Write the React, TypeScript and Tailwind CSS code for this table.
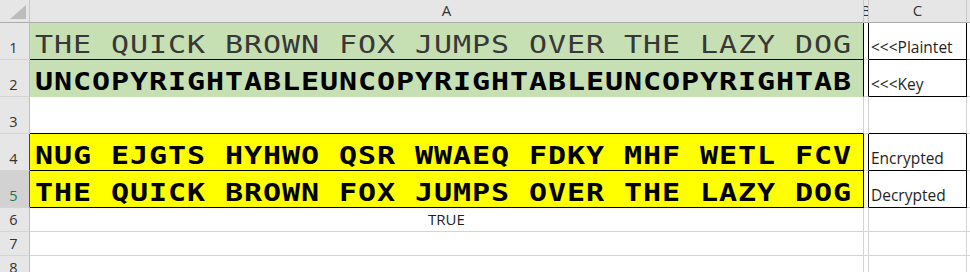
import React from 'react';

const mono = "font-['DejaVu_Sans_Mono',monospace]";
const ui = "font-['Open_Sans',sans-serif]";

function RowHead({ n, active, dark }: { n: number; active?: boolean; dark?: boolean }) {
  return (
    <div
      className={`flex items-end justify-center pr-[2px] pb-[4px] border-r border-b border-b-[#d4d4d4] text-[14.5px] leading-none ${ui} ${
        active
          ? 'bg-[#d2d2d2] text-[#217346] border-r-[#217346]'
          : dark
          ? 'bg-[#e6e6e6] text-[#333] border-r-[#444]'
          : 'bg-[#e6e6e6] text-[#333] border-r-[#bdbdbd]'
      }`}
    >
      {n}
    </div>
  );
}

function BigText({ text, light }: { text: string; light?: boolean }) {
  return (
    <div className="flex items-end h-full pl-[5px] pb-[2px] overflow-visible">
      <span
        className={`block origin-left scale-x-[1.2] whitespace-nowrap text-[25px] leading-none tracking-[0.78px] ${mono} ${
          light ? 'font-normal text-[#383838]' : 'font-bold text-black'
        }`}
      >
        {text}
      </span>
    </div>
  );
}

function Label({ text }: { text: string }) {
  return (
    <div className={`flex items-end h-full pl-[2px] pb-[4px] text-[15.5px] leading-none text-[#1f1f1f] whitespace-nowrap ${ui}`}>
      {text}
    </div>
  );
}

export default function App() {
  return (
    <div className="w-[970px] h-[272px] overflow-hidden bg-white">
      <div className="grid grid-cols-[30px_834px_5px_98px_1fr] grid-rows-[23px_37px_37px_37px_37px_37px_24px_24px_24px]">
        {/* column headers */}
        <div className="flex items-end justify-end pr-[3px] pb-[3px] bg-[#e6e6e6] border-r border-b border-r-[#c8c8c8] border-b-[#ababab]">
          <svg width="16" height="14" viewBox="0 0 16 14">
            <polygon points="0,14 16,14 16,0" fill="#bcbcbc" />
          </svg>
        </div>
        <div className={`flex items-end justify-center pb-[4px] bg-[#e6e6e6] border-r border-b border-r-[#c8c8c8] border-b-[#ababab] text-[15px] leading-none text-[#333] ${ui}`}>
          A
        </div>
        <div className={`flex items-end justify-center pb-[4px] overflow-hidden bg-[#e6e6e6] border-r border-b border-r-[#c8c8c8] border-b-[#ababab] text-[15px] leading-none text-[#333] ${ui}`}>
          B
        </div>
        <div className={`flex items-end justify-center pb-[4px] bg-[#e6e6e6] border-r border-b border-r-[#c8c8c8] border-b-[#ababab] text-[15px] leading-none text-[#333] ${ui}`}>
          C
        </div>
        <div className="bg-[#e6e6e6] border-b border-b-[#ababab]" />

        {/* row 1 */}
        <RowHead n={1} />
        <div className="bg-[#c6e0b4] border-r border-b border-r-black border-b-black">
          <BigText text="THE QUICK BROWN FOX JUMPS OVER THE LAZY DOG" light />
        </div>
        <div className="border-r border-b border-r-black border-b-[#d4d4d4]" />
        <div className="border-r border-b border-black">
          <Label text="<<<Plaintet" />
        </div>
        <div className="border-b border-[#d4d4d4]" />

        {/* row 2 */}
        <RowHead n={2} />
        <div className="bg-[#c6e0b4] border-r border-b border-r-black border-b-[#c6e0b4]">
          <BigText text="UNCOPYRIGHTABLEUNCOPYRIGHTABLEUNCOPYRIGHTAB" />
        </div>
        <div className="border-r border-b border-r-black border-b-[#d4d4d4]" />
        <div className="border-r border-b border-black">
          <Label text="<<<Key" />
        </div>
        <div className="border-b border-[#d4d4d4]" />

        {/* row 3 */}
        <RowHead n={3} />
        <div className="border-r border-b border-r-[#d4d4d4] border-b-black" />
        <div className="border-r border-b border-[#d4d4d4]" />
        <div className="border-r border-b border-r-[#d4d4d4] border-b-black" />
        <div className="border-b border-[#d4d4d4]" />

        {/* row 4 */}
        <RowHead n={4} dark />
        <div className="bg-[#ffff00] border-r border-b border-black">
          <BigText text="NUG EJGTS HYHWO QSR WWAEQ FDKY MHF WETL FCV" />
        </div>
        <div className="border-r border-b border-r-black border-b-[#d4d4d4]" />
        <div className="border-r border-b border-black">
          <Label text="Encrypted" />
        </div>
        <div className="border-b border-[#d4d4d4]" />

        {/* row 5 */}
        <RowHead n={5} active />
        <div className="bg-[#ffff00] border-r border-b border-black">
          <BigText text="THE QUICK BROWN FOX JUMPS OVER THE LAZY DOG" />
        </div>
        <div className="border-r border-b border-r-black border-b-[#d4d4d4]" />
        <div className="border-r border-b border-black">
          <Label text="Decrypted" />
        </div>
        <div className="border-b border-[#d4d4d4]" />

        {/* row 6 */}
        <RowHead n={6} />
        <div className={`flex items-end justify-center pb-[4px] border-r border-b border-[#d4d4d4] text-[15px] leading-none text-[#1f1f1f] ${ui}`}>
          TRUE
        </div>
        <div className="border-r border-b border-[#d4d4d4]" />
        <div className="border-r border-b border-[#d4d4d4]" />
        <div className="border-b border-[#d4d4d4]" />

        {/* row 7 */}
        <RowHead n={7} />
        <div className="border-r border-b border-[#d4d4d4]" />
        <div className="border-r border-b border-[#d4d4d4]" />
        <div className="border-r border-b border-[#d4d4d4]" />
        <div className="border-b border-[#d4d4d4]" />

        {/* row 8 */}
        <RowHead n={8} />
        <div className="border-r border-b border-[#d4d4d4]" />
        <div className="border-r border-b border-[#d4d4d4]" />
        <div className="border-r border-b border-[#d4d4d4]" />
        <div className="border-b border-[#d4d4d4]" />
      </div>
    </div>
  );
}
